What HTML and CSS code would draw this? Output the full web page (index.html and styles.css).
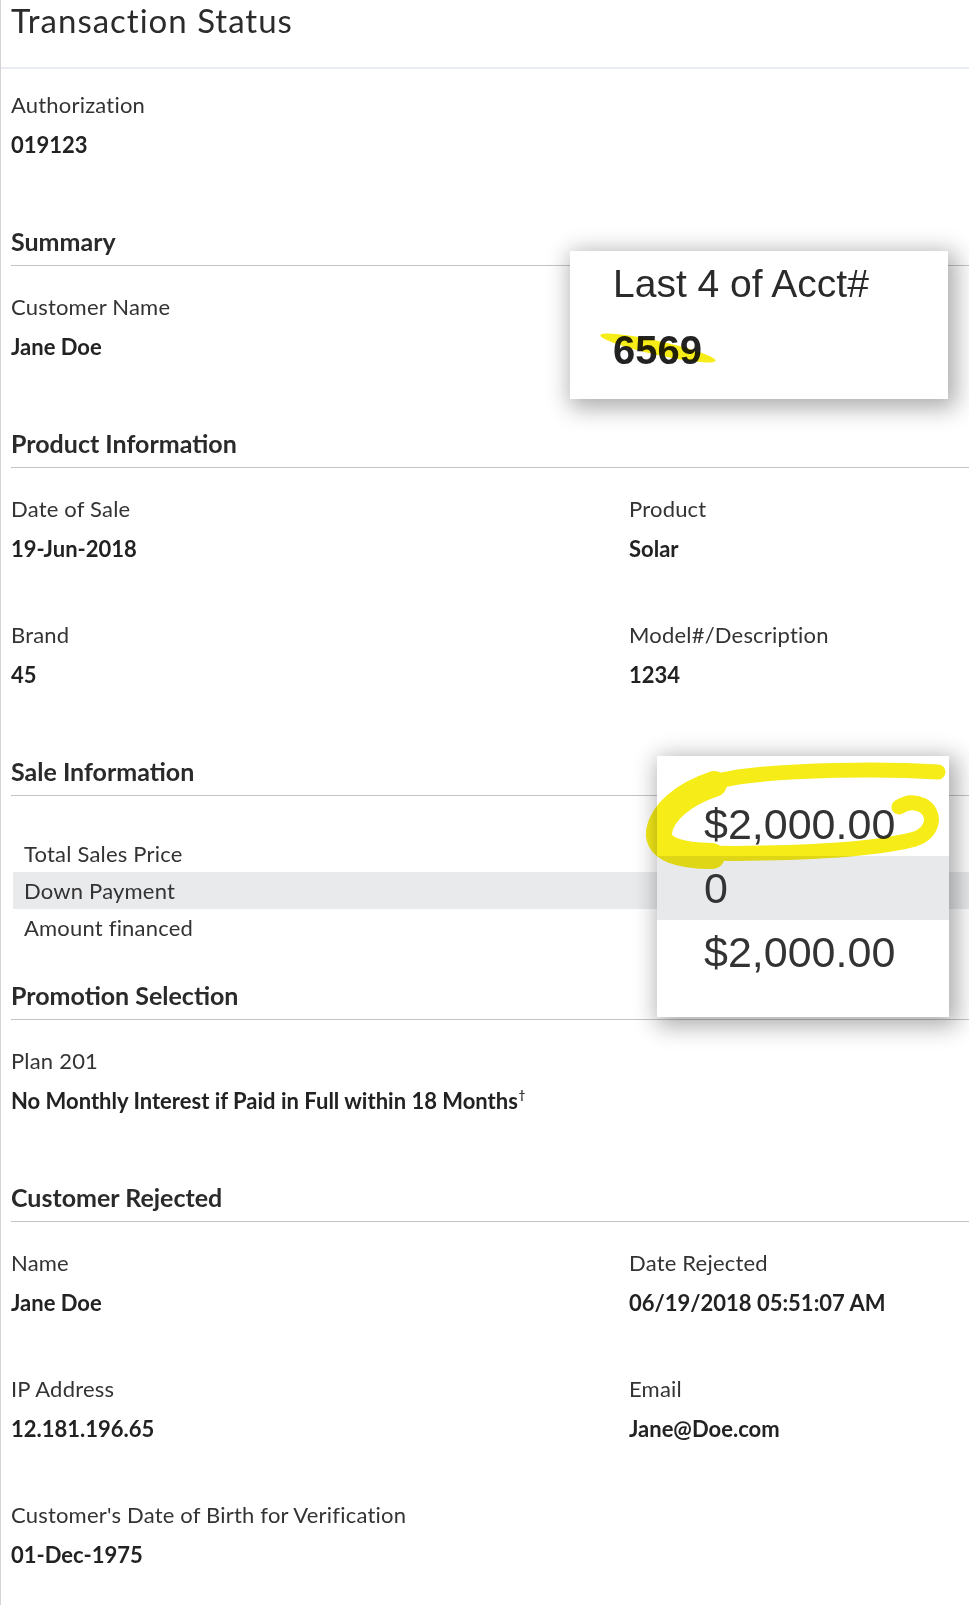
FILE: index.html
```html
<!DOCTYPE html>
<html lang="en">
<head>
<meta charset="utf-8">
<title>Transaction Status</title>
<link rel="stylesheet" href="styles.css">
</head>
<body>
<div class="page">
  <header class="title-bar">
    <h1 class="title">Transaction Status</h1>
  </header>

  <main class="content">
    <section class="block block-first">
      <div class="field">
        <div class="label">Authorization</div>
        <div class="value">019123</div>
      </div>
    </section>

    <section class="block">
      <h2 class="heading">Summary</h2>
      <div class="grid">
        <div class="field">
          <div class="label">Customer Name</div>
          <div class="value">Jane Doe</div>
        </div>
      </div>
    </section>

    <section class="block">
      <h2 class="heading">Product Information</h2>
      <div class="grid">
        <div class="field">
          <div class="label">Date of Sale</div>
          <div class="value">19-Jun-2018</div>
        </div>
        <div class="field">
          <div class="label">Product</div>
          <div class="value">Solar</div>
        </div>
        <div class="field">
          <div class="label">Brand</div>
          <div class="value">45</div>
        </div>
        <div class="field">
          <div class="label">Model#/Description</div>
          <div class="value">1234</div>
        </div>
      </div>
    </section>

    <section class="block">
      <h2 class="heading">Sale Information</h2>
      <table class="sale-table">
        <tbody>
          <tr><td>Total Sales Price</td><td></td></tr>
          <tr class="shaded"><td>Down Payment</td><td></td></tr>
          <tr><td>Amount financed</td><td></td></tr>
        </tbody>
      </table>
    </section>

    <section class="block block-after-table">
      <h2 class="heading">Promotion Selection</h2>
      <div class="grid">
        <div class="field field-wide">
          <div class="label">Plan 201</div>
          <div class="value">No Monthly Interest if Paid in Full within 18 Months<sup class="dagger">†</sup></div>
        </div>
      </div>
    </section>

    <section class="block">
      <h2 class="heading">Customer Rejected</h2>
      <div class="grid">
        <div class="field">
          <div class="label">Name</div>
          <div class="value">Jane Doe</div>
        </div>
        <div class="field">
          <div class="label">Date Rejected</div>
          <div class="value">06/19/2018 05:51:07 AM</div>
        </div>
        <div class="field">
          <div class="label">IP Address</div>
          <div class="value">12.181.196.65</div>
        </div>
        <div class="field">
          <div class="label">Email</div>
          <div class="value">Jane@Doe.com</div>
        </div>
        <div class="field field-wide">
          <div class="label">Customer's Date of Birth for Verification</div>
          <div class="value">01-Dec-1975</div>
        </div>
      </div>
    </section>
  </main>

  <div class="zoom-card zoom-acct">
    <div class="zoom-acct-label">Last 4 of Acct#</div>
    <div class="zoom-acct-value">6569</div>
  </div>

  <div class="zoom-card zoom-amounts">
    <div class="zoom-row">$2,000.00</div>
    <div class="zoom-row zoom-row-shaded">0</div>
    <div class="zoom-row">$2,000.00</div>
  </div>

  <svg class="marker" width="969" height="1605" viewBox="0 0 969 1605" aria-hidden="true">
    <ellipse cx="658" cy="348" rx="59" ry="7" transform="rotate(12.5 658 348)" fill="#f6ec17"/>
    <path d="M 938 772 C 880 768, 790 770, 738 777 C 698 783, 664 802, 658 830 C 654 851, 692 855, 763 853 C 822 852, 882 848, 915 839 C 935 832, 936 812, 922 805 C 913 801, 905 803, 899 807"
          fill="none" stroke="#f6ec17" stroke-width="15" stroke-linecap="round" stroke-linejoin="round"/>
    <path d="M 714 784 C 684 794, 662 812, 659 832 C 657 849, 680 856, 712 856"
          fill="none" stroke="#f6ec17" stroke-width="26" stroke-linecap="round"/>
  </svg>
</div>
</body>
</html>
```

FILE: styles.css
```css
html, body {
  margin: 0;
  padding: 0;
  background: #ffffff;
}

body {
  font-family: Lato, "Open Sans", "Liberation Sans", sans-serif;
  color: #2a2a2a;
}

.page {
  position: relative;
  width: 968px;
  min-height: 1605px;
  border-left: 1px solid #d4d4d4;
  overflow: hidden;
}

.title-bar {
  height: 67px;
  border-bottom: 2px solid #e9edf1;
  padding-left: 10px;
}

.title {
  margin: 0;
  font-size: 33px;
  line-height: 40px;
  font-weight: 400;
  letter-spacing: 1px;
  color: #2b2b2b;
}

.content {
  padding-left: 10px;
}

.block-first {
  padding-top: 24px;
}

.heading {
  margin: 69px 0 0;
  font-size: 25px;
  line-height: 30px;
  font-weight: 700;
  color: #2a2a2a;
  padding-bottom: 9px;
  border-bottom: 1px solid #c4c4c4;
}

.block-after-table .heading {
  margin-top: 34px;
}

.grid {
  margin-top: 29px;
  display: grid;
  grid-template-columns: 618px 1fr;
  row-gap: 62px;
}

.field-wide {
  grid-column: 1 / -1;
}

.label {
  font-size: 22px;
  line-height: 24px;
  letter-spacing: 0.2px;
  color: #333333;
}

.value {
  margin-top: 16px;
  font-size: 22px;
  line-height: 24px;
  font-weight: 700;
  color: #222222;
}

.dagger {
  font-size: 11px;
  line-height: 0;
  vertical-align: 10px;
  margin-left: 1px;
}

.sale-table {
  margin: 39px 0 0 2px;
  width: calc(100% - 2px);
  border-collapse: collapse;
}

.sale-table td {
  height: 37px;
  padding: 0 0 0 11px;
  font-size: 22px;
  line-height: 24px;
  letter-spacing: 0.2px;
  color: #333333;
}

.sale-table tr.shaded td {
  background: #e9eaec;
}

.zoom-card {
  position: absolute;
  background: #ffffff;
  box-shadow: 4px 5px 22px 4px rgba(0, 0, 0, 0.33);
  font-family: "Liberation Sans", Arial, sans-serif;
}

.zoom-acct {
  left: 569px;
  top: 251px;
  width: 378px;
  height: 148px;
  padding: 13px 0 0 43px;
  box-sizing: border-box;
}

.zoom-acct-label {
  font-size: 39px;
  line-height: 39px;
  color: #2a2a2a;
}

.zoom-acct-value {
  margin-top: 27px;
  font-size: 40px;
  line-height: 40px;
  font-weight: 700;
  color: #222222;
}

.zoom-amounts {
  left: 656px;
  top: 756px;
  width: 292px;
  height: 261px;
  padding-top: 36px;
  box-sizing: border-box;
}

.zoom-row {
  height: 64px;
  line-height: 64px;
  padding-left: 47px;
  font-size: 43px;
  color: #333333;
}

.zoom-row-shaded {
  background: #e8e9eb;
}

.marker {
  position: absolute;
  left: -1px;
  top: 0;
  pointer-events: none;
  mix-blend-mode: multiply;
}
```
